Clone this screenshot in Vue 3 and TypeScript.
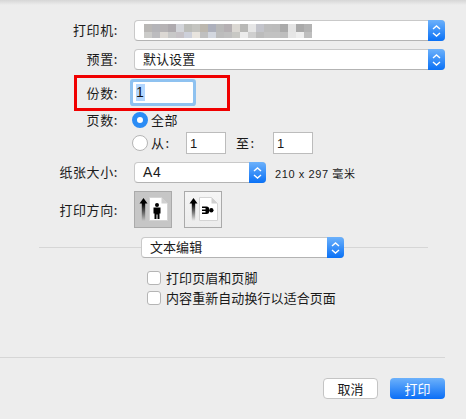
<script setup lang="ts">
const top = ['#b9b7b5','#b4b4b8','#b6b3b5','#aeaaae','#d3d5da','#bcbdb9','#c4c4c0','#bcb7ae','#adb0bc','#b9b9b9','#b5b0b3','#dbd8d3','#b8b8b6','#e6e6e6','#c3c4cb','#bdbdbd','#bcbcbc','#aaaaaa','#e4e4e4','#a9a9a9','#b3b3b3']
const bottom = ['#cbcbc9','#bcbcbf','#dcd8d4','#c8c8c8','#c6c2c6','#cdd0da','#e8e4de','#c0c0c0','#d3d7df','#bdbdbd','#c0c0c0','#c8c8c4','#ececec','#cfcfcf','#bcbcbc','#c2c2c2','#c2c2c2','#bebebe','#e6e6e6','#efefef','#bebebe']
const cells = [...top, ...bottom]
</script>

<template>
  <div class="page">
    <div class="topshade"></div>

    <div class="row r1">
      <span class="label">打印机:</span>
      <div class="select wide">
        <div class="mosaic">
          <i v-for="(c, n) in cells" :key="n" :style="{ background: c }"></i>
        </div>
        <span class="stepper">
          <svg width="11" height="14" viewBox="0 0 11 14"><path d="M2 5 L5.5 2 L9 5 M2 9 L5.5 12 L9 9" fill="none" stroke="#fff" stroke-width="1.4"/></svg>
        </span>
      </div>
    </div>

    <div class="row r2">
      <span class="label">预置:</span>
      <div class="select wide">
        <span class="value">默认设置</span>
        <span class="stepper">
          <svg width="11" height="14" viewBox="0 0 11 14"><path d="M2 5 L5.5 2 L9 5 M2 9 L5.5 12 L9 9" fill="none" stroke="#fff" stroke-width="1.4"/></svg>
        </span>
      </div>
    </div>

    <div class="row r3">
      <span class="label">份数:</span>
      <div class="copies"><span class="selected">1</span></div>
      <div class="redbox"></div>
    </div>

    <div class="row r4">
      <span class="label">页数:</span>
      <span class="radio on"></span>
      <span class="opt">全部</span>
    </div>

    <div class="row r5">
      <span class="label"></span>
      <span class="radio"></span>
      <span class="opt from">从:</span>
      <div class="num">1</div>
      <span class="opt to">至:</span>
      <div class="num">1</div>
    </div>

    <div class="row r6">
      <span class="label">纸张大小:</span>
      <div class="select paper">
        <span class="value latin">A4</span>
        <span class="stepper">
          <svg width="11" height="14" viewBox="0 0 11 14"><path d="M2 5 L5.5 2 L9 5 M2 9 L5.5 12 L9 9" fill="none" stroke="#fff" stroke-width="1.4"/></svg>
        </span>
      </div>
      <span class="dims">210 x 297 毫米</span>
    </div>

    <div class="row r7">
      <span class="label">打印方向:</span>
      <div class="orient active">
        <svg width="36" height="35" viewBox="0 0 36 35">
          <defs>
            <linearGradient id="fadeA" x1="0" y1="0" x2="0" y2="1">
              <stop offset="0.25" stop-color="#000"/>
              <stop offset="1" stop-color="#000" stop-opacity="0"/>
            </linearGradient>
          </defs>
          <path d="M8.5 6 L4.5 11.5 L6.8 11.5 L6.8 29 L10.2 29 L10.2 11.5 L12.5 11.5 Z" fill="url(#fadeA)"/>
          <path d="M14.5 5.5 H26.5 L32.5 11.5 V28.5 H14.5 Z" fill="#fff" stroke="#d4d4d4" stroke-width="1"/>
          <path d="M26.5 5.5 V11.5 H32.5 Z" fill="#d0d0d0"/>
          <circle cx="22" cy="13" r="2" fill="#000"/>
          <path d="M18.5 15.6 H25.5 V21.5 H24.5 V27 H22.5 V22.5 H21.5 V27 H19.5 V21.5 H18.5 Z" fill="#000"/>
        </svg>
      </div>
      <div class="orient">
        <svg width="36" height="35" viewBox="0 0 36 35">
          <defs>
            <linearGradient id="fadeB" x1="0" y1="0" x2="0" y2="1">
              <stop offset="0.25" stop-color="#000"/>
              <stop offset="1" stop-color="#000" stop-opacity="0"/>
            </linearGradient>
          </defs>
          <path d="M8.5 6 L4.5 11.5 L6.8 11.5 L6.8 29 L10.2 29 L10.2 11.5 L12.5 11.5 Z" fill="url(#fadeB)"/>
          <path d="M14.5 5.5 H26.5 L32.5 11.5 V28.5 H14.5 Z" fill="#fff" stroke="#d4d4d4" stroke-width="1"/>
          <path d="M26.5 5.5 V11.5 H32.5 Z" fill="#d0d0d0"/>
          <path d="M17 14.5 H21.5 C23.5 14.5 24 15.5 24 16.5 V20 C24 21 23.5 22 21.5 22 H17 V20.4 H20.5 V19 H17 V17.5 H20.5 V16.1 H17 Z" fill="#000"/>
          <circle cx="26.3" cy="18.2" r="2.2" fill="#000"/>
        </svg>
      </div>
    </div>

    <div class="section">
      <span class="rule left"></span>
      <div class="select app">
        <span class="value">文本编辑</span>
        <span class="stepper">
          <svg width="11" height="14" viewBox="0 0 11 14"><path d="M2 5 L5.5 2 L9 5 M2 9 L5.5 12 L9 9" fill="none" stroke="#fff" stroke-width="1.4"/></svg>
        </span>
      </div>
      <span class="rule right"></span>
    </div>

    <div class="checks">
      <label class="check"><span class="box"></span>打印页眉和页脚</label>
      <label class="check"><span class="box"></span>内容重新自动换行以适合页面</label>
    </div>

    <div class="footer">
      <div class="actions">
        <button class="btn">取消</button>
        <button class="btn primary">打印</button>
      </div>
    </div>
  </div>
</template>

<style>
html, body { margin: 0; background: #ededed; }
</style>

<style scoped>
.page {
  position: relative;
  width: 466px;
  height: 419px;
  box-sizing: border-box;
  padding-top: 20px;
  overflow: hidden;
  background: #ededed;
  color: #1a1a1a;
  font-family: "Noto Sans CJK SC", "Liberation Sans", sans-serif;
  font-size: 13px;
}
.topshade {
  position: absolute;
  left: 0; right: 0; top: 0;
  height: 5px;
  background: linear-gradient(#d6d6d6, #ededed);
}
.row { display: flex; align-items: center; position: relative; }
.label {
  width: 118px;
  flex: none;
  text-align: right;
  letter-spacing: 0.6px;
  white-space: nowrap;
  padding-bottom: 2px;
}
.r3 .label, .r7 .label { padding-bottom: 0; }
.r1, .r2 { height: 21px; padding-right: 21px; }
.r2 { margin-top: 8px; }
.r1 .label, .r2 .label, .r6 .label { margin-right: 16px; }
.r3 { margin-top: 12px; height: 21px; }
.r3 .label { margin-right: 15px; }
.r4 { margin-top: 9px; height: 16px; }
.r4 .label, .r5 .label { margin-right: 14px; }
.r5 { margin-top: 4px; height: 22px; }
.r6 { margin-top: 8px; height: 21px; }
.r7 { margin-top: 8px; height: 37px; }
.r7 .label { margin-right: 16px; }

.select {
  position: relative;
  display: flex;
  align-items: center;
  box-sizing: border-box;
  height: 21px;
  background: #fff;
  border-radius: 4px;
  border: 1px solid #c9c9c9;
  border-bottom-color: #b3b3b3;
}
.wide { flex: 1; }
.paper { width: 132px; }
.value { padding-left: 8px; padding-bottom: 2px; letter-spacing: 0.05px; line-height: 17px; }
.latin { font-family: "Liberation Sans", sans-serif; font-size: 14px; letter-spacing: 0.6px; padding-bottom: 0; }
.stepper {
  position: absolute;
  right: -1px;
  top: -1px;
  bottom: -1px;
  width: 17px;
  display: flex;
  align-items: center;
  justify-content: center;
  border-radius: 0 4px 4px 0;
  background: linear-gradient(#6cb1fb, #0a71f6);
}
.mosaic {
  margin-left: 9px;
  display: grid;
  grid-template-columns: repeat(21, 8px);
  grid-template-rows: 8px 6px;
}
.mosaic i { display: block; }

.copies {
  box-sizing: border-box;
  width: 60px;
  height: 21px;
  background: #fff;
  box-shadow: 0 0 0 3px #8fc2f0;
  border-radius: 1px;
  padding-left: 3px;
  line-height: 21px;
  font-family: "Liberation Sans", sans-serif;
  font-size: 14px;
  color: #111;
}
.selected { background: #b3d7ff; display: inline-block; height: 17px; line-height: 17px; margin-top: 2px; padding-right: 1px; }
.redbox {
  position: absolute;
  left: 74px;
  top: -7px;
  width: 156px;
  height: 36px;
  box-sizing: border-box;
  border: 3px solid #f00000;
  pointer-events: none;
}
.radio {
  box-sizing: border-box;
  width: 16px;
  height: 16px;
  flex: none;
  border-radius: 50%;
  background: #fff;
  border: 1px solid #b5b5b5;
}
.radio.on {
  border: 5px solid #2b8cf5;
}
.opt { margin-left: 3px; padding-bottom: 2px; letter-spacing: 0.6px; }
.from { width: 35px; letter-spacing: 1.6px; }
.num {
  box-sizing: border-box;
  width: 40px;
  height: 22px;
  background: #fff;
  border: 1px solid #bcbcbc;
  padding-left: 3px;
  line-height: 22px;
  font-family: "Liberation Sans", sans-serif;
  font-size: 13px;
}
.to { margin-left: 10px; width: 37px; letter-spacing: 1.6px; }
.dims {
  margin-left: 9px;
  font-family: "Liberation Sans", "Noto Sans CJK SC", sans-serif;
  font-size: 11px;
  letter-spacing: 0.6px;
}
.orient {
  box-sizing: border-box;
  width: 38px;
  height: 37px;
  border: 1px solid #aaa;
  background: linear-gradient(#f5f5f5, #ececec);
  margin-right: 12px;
  overflow: hidden;
}
.orient svg { display: block; }
.orient.active { background: #c6c6c6; }
.section {
  margin-top: 9px;
  display: flex;
  align-items: center;
  height: 21px;
  padding-left: 39px;
}
.rule { height: 1px; background: #d6d6d6; }
.rule.left { width: 102px; }
.rule.right { width: 84px; }
.app { width: 203px; }
.checks { margin-top: 12px; margin-left: 147px; display: flex; flex-direction: column; gap: 5px; }
.check { display: flex; align-items: center; height: 15px; gap: 5px; letter-spacing: 0.07px; }
.box {
  box-sizing: border-box;
  width: 14px;
  height: 14px;
  flex: none;
  background: #fff;
  border: 1px solid #b5b5b5;
  border-radius: 3px;
}
.footer {
  position: absolute;
  left: 0;
  right: 0;
  top: 357px;
  width: 445px;
  border-top: 1px solid #d6d6d6;
}
.actions { display: flex; justify-content: flex-end; gap: 12px; margin-top: 20px; }
.btn {
  box-sizing: border-box;
  width: 55px;
  height: 21px;
  padding: 0;
  border-radius: 4px;
  border: 1px solid #c4c4c4;
  background: #fff;
  color: #1a1a1a;
  font-family: "Noto Sans CJK SC", sans-serif;
  font-size: 13px;
  line-height: 19px;
}
.btn.primary {
  border: none;
  color: #fff;
  background: linear-gradient(#6cb1fb, #0a6ef6);
}
</style>
